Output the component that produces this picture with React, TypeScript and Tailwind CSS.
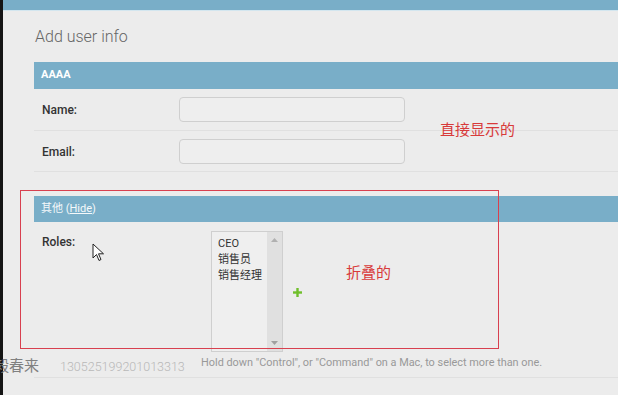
import React from "react";

export default function App() {
  return (
    <div className="relative w-[618px] h-[395px] overflow-hidden bg-[#ececec] font-['Roboto',_'Noto_Sans_CJK_SC',_sans-serif]">
      <div className="flex h-full">
        <div className="w-[3px] shrink-0 bg-[#151515]" />
        <div className="flex-1 flex flex-col">
          <div className="h-[11px] bg-[#79aec8] border-b border-[#d3e6ef]" />
          <div className="pl-[31px]">
            <h1 className="mt-[16px] mb-[15px] pl-[1px] text-[16px] leading-[20px] font-light text-[#666]">Add user info</h1>

            <div className="h-[27px] bg-[#79aec8] px-[7px] flex items-center text-[11px] font-bold text-white">AAAA</div>

            <div className="flex h-[42px] pl-[8px] pt-[8px] border-b border-[#e0e0e0]">
              <label className="w-[137px] pt-[6px] text-[12px] leading-[14px] font-medium text-[#333]">Name:</label>
              <div className="w-[226px] h-[25px] rounded-[4px] border border-[#cfcfcf] bg-[#eeeeee]" />
            </div>
            <div className="flex h-[41px] pl-[8px] pt-[8px] border-b border-[#e0e0e0]">
              <label className="w-[137px] pt-[6px] text-[12px] leading-[14px] font-medium text-[#333]">Email:</label>
              <div className="w-[226px] h-[25px] rounded-[4px] border border-[#cfcfcf] bg-[#eeeeee]" />
            </div>

            <div className="mt-[24px] h-[26px] bg-[#79aec8] px-[7px] flex items-center text-[11px] text-[#f4f8fa]">
              其他&nbsp;(<span className="underline">Hide</span>)
            </div>

            <div className="pl-[8px] pt-[9px] pb-[7px] border-b border-[#e0e0e0]">
              <div className="flex">
                <label className="w-[169px] pt-[4px] text-[12px] leading-[14px] font-medium text-[#333]">Roles:</label>
                <div className="flex w-[72px] h-[121px] border border-[#cfcfcf] bg-[#efefef]">
                  <div className="flex-1 pl-[6px] pt-[4px] text-[11px] leading-[16px] text-[#333]">
                    <div>CEO</div>
                    <div>销售员</div>
                    <div>销售经理</div>
                  </div>
                  <div className="w-[15px] bg-[#e0e0e0] flex flex-col items-center justify-between py-[6px]">
                    <svg width="7" height="4" viewBox="0 0 7 4"><path d="M3.5 0L7 4H0z" fill="#b0b0b0" /></svg>
                    <svg width="7" height="4" viewBox="0 0 7 4"><path d="M0 0h7L3.5 4z" fill="#a0a0a0" /></svg>
                  </div>
                </div>
                <div className="ml-[10px] mt-[57px]">
                  <svg width="9" height="9" viewBox="0 0 9 9">
                    <rect x="3.3" y="0" width="2.4" height="9" fill="#70bf2b" />
                    <rect x="0" y="3.3" width="9" height="2.4" fill="#70bf2b" />
                  </svg>
                </div>
              </div>
              <p className="ml-[159px] mt-[4px] text-[10.9px] leading-[14px] text-[#999]">
                Hold down "Control", or "Command" on a Mac, to select more than one.
              </p>
            </div>
          </div>
        </div>
      </div>

      <div className="absolute left-[20px] top-[190px] w-[479px] h-[159px] border border-[#d8404f]" />
      <div className="absolute left-[440px] top-[121px] text-[15px] leading-[18px] text-[#d83a3a]">直接显示的</div>
      <div className="absolute left-[346px] top-[264px] text-[15px] leading-[18px] text-[#d83a3a]">折叠的</div>
      <div className="absolute left-[-6px] top-[357px] text-[15px] leading-[18px] text-[#808080]">毅春来</div>
      <div className="absolute left-[60px] top-[359px] text-[12.5px] leading-[15px] font-light text-[#b8b8b8]">130525199201013313</div>

      <svg className="absolute left-[92px] top-[243px]" width="13" height="19" viewBox="0 0 13 19">
        <path d="M1 1L1 15L4.5 11.5L7 17.5L9 16.5L6.5 10.8L11.5 10.8Z" fill="#fff" stroke="#222" strokeWidth="1" strokeLinejoin="round" />
      </svg>
    </div>
  );
}
